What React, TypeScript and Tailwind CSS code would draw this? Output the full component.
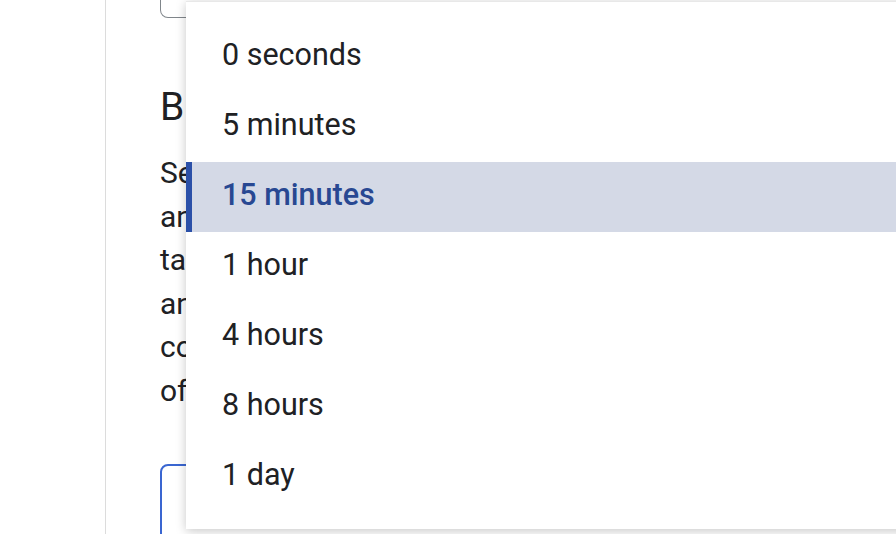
import React from "react";

const items = ["0 seconds", "5 minutes", "15 minutes", "1 hour", "4 hours", "8 hours", "1 day"];
const selected = 2;

export default function App() {
  return (
    <div
      className="relative w-[896px] h-[534px] overflow-hidden bg-white text-[#202124]"
      style={{ fontFamily: "Roboto, 'Noto Sans', Arial, sans-serif" }}
    >
      <div className="flex h-full">
        <div className="w-[106px] shrink-0 border-r border-[#dcdcdc]" />
        <div className="flex flex-col pl-[54px] w-[900px] shrink-0">
          <div className="h-[18px] w-[800px] shrink-0 border-[1.5px] border-t-0 border-[#80868b] rounded-b-[8px]" />
          <h2 className="mt-[66px] shrink-0 text-[39px] leading-[47px] font-normal whitespace-nowrap">Break reminders</h2>
          <div className="mt-[20px] shrink-0 text-[30px] leading-[43.5px] whitespace-nowrap">
            <div>Set a break reminder</div>
            <div>and we'll remind you to</div>
            <div>take a short break</div>
            <div>and rest your eyes</div>
            <div>complementing your hours</div>
            <div>of work.</div>
          </div>
          <div className="mt-[52px] h-[200px] w-[800px] shrink-0 border-[2.5px] border-[#3a66d1] rounded-[8px]" />
        </div>
      </div>

      <div className="absolute left-[186px] top-[1px] w-[730px] h-[528px] bg-white border-t border-[#e8e8e8] shadow-[0_2px_10px_rgba(0,0,0,0.22)] pt-[20px]">
        {items.map((it, i) =>
          i === selected ? (
            <div
              key={it}
              className="h-[70px] flex items-center pb-[5px] bg-[#d4d9e6] border-l-[6px] border-[#2b50a8] pl-[30px] text-[30.5px] font-medium text-[#284892]"
            >
              {it}
            </div>
          ) : (
            <div key={it} className="h-[70px] flex items-center pb-[5px] pl-[36px] text-[30.5px] text-[#202124]">
              {it}
            </div>
          )
        )}
      </div>
    </div>
  );
}
